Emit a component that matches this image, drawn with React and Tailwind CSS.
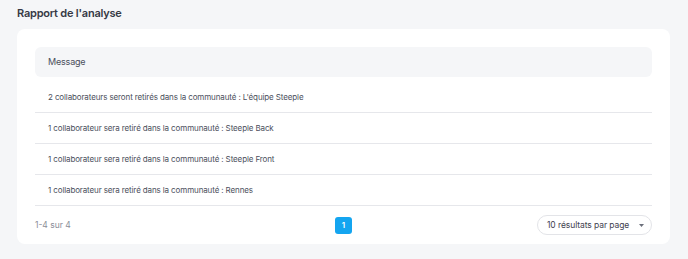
const rows = [
  "2 collaborateurs seront retirés dans la communauté : L'équipe Steeple",
  '1 collaborateur sera retiré dans la communauté : Steeple Back',
  '1 collaborateur sera retiré dans la communauté : Steeple Front',
  '1 collaborateur sera retiré dans la communauté : Rennes',
];

export default function App() {
  return (
    <div className="min-h-[259px] bg-[#f5f6f8] px-[17px] pt-[6px] pb-[16px] font-['Inter',sans-serif]">
      <h1 className="text-[11px] leading-[15px] font-semibold tracking-[-0.02em] text-[#363945] mb-[8px]">
        Rapport de l'analyse
      </h1>

      <div className="w-[653px] bg-white rounded-[8px] px-[18px] pt-[18px]">
        {/* Tableau */}
        <div className="h-[30px] flex items-center bg-[#f5f6f8] rounded-[6px] px-[13px] text-[9px] tracking-[-0.02em] text-[#4b4f5c]">
          Message
        </div>
        <div className="mt-[5px]">
          {rows.map((msg) => (
            <div
              key={msg}
              className="h-[31px] flex items-center px-[13px] border-b border-[#e6e7eb] text-[8px] tracking-[-0.015em] text-[#4b4f5c]"
            >
              {msg}
            </div>
          ))}
        </div>

        {/* Pagination */}
        <div className="flex items-center justify-between h-[38px]">
          <span className="w-[115px] text-[8.5px] text-[#8a8d98]">1-4 sur 4</span>
          <button className="w-[17px] h-[17px] rounded-[3px] bg-[#14a5f0] text-white text-[8px] font-semibold flex items-center justify-center">
            1
          </button>
          <div className="w-[115px] h-[20px] rounded-full border border-[#e3e4e8] flex items-center justify-between pl-[9px] pr-[7px] text-[8.5px] tracking-[-0.01em] text-[#3f4250]">
            <span>10 résultats par page</span>
            <svg width="5" height="3" viewBox="0 0 5 3">
              <path d="M0 0 L5 0 L2.5 3 Z" fill="#6b6f7b" />
            </svg>
          </div>
        </div>
      </div>
    </div>
  );
}
